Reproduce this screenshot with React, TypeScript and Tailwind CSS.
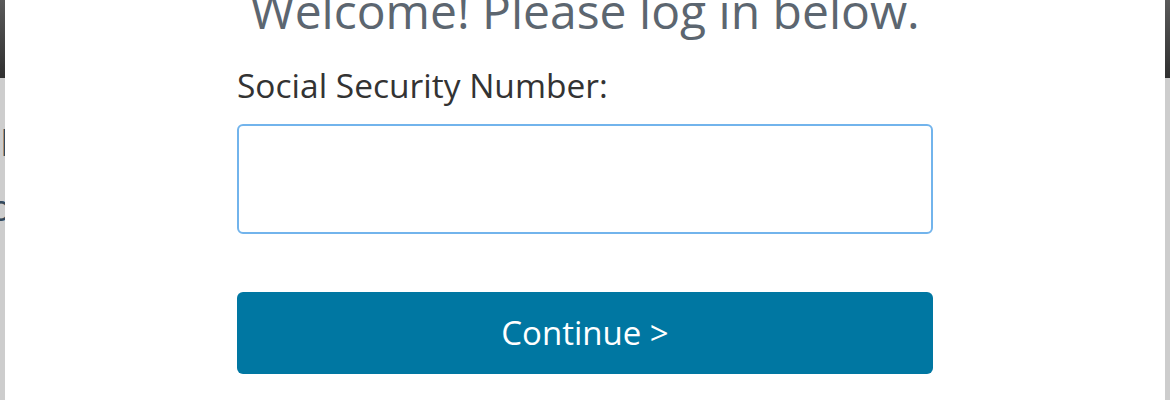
const SideStrip = ({ left }: { left?: boolean }) => (
  <div className="flex w-[5px] shrink-0 flex-col overflow-hidden">
    <div className="h-[78px] shrink-0 bg-gradient-to-b from-[#5a5a5a] to-[#303030]" />
    <div className="flex-1 bg-[#cdcdcd]">
      {left && (
        <div className="font-['Open_Sans',sans-serif] text-[#34495c]">
          <div className="mt-[44px] whitespace-nowrap text-[38px] font-semibold leading-[38px]">F</div>
          <div className="-ml-[10px] mt-[30px] whitespace-nowrap text-[36px] leading-[36px]">o</div>
        </div>
      )}
    </div>
  </div>
);

export default function App() {
  return (
    <div className="flex h-[400px] w-[1170px] overflow-hidden font-['Open_Sans',sans-serif]">
      <SideStrip left />

      <div className="flex flex-1 flex-col items-center bg-white">
        <div className="flex w-[696px] flex-col">
          <h1 className="-mt-[13px] whitespace-nowrap text-center text-[48px] font-normal leading-[48px] text-[#5c6670]">
            Welcome! Please log in below.
          </h1>

          <label className="mt-[34px] block text-[33.5px] leading-[33px] text-[#333333]">
            Social Security Number:
          </label>

          <input
            type="text"
            className="mt-[22px] h-[110px] w-full rounded-[6px] border-2 border-[#72b4ec] bg-white px-4 text-[28px] text-[#333] outline-none"
          />

          <button
            type="button"
            className="mt-[58px] h-[82px] w-full rounded-[6px] bg-[#0077a2] text-[33px] text-white"
          >
            Continue &gt;
          </button>
        </div>
      </div>

      <SideStrip />
    </div>
  );
}
